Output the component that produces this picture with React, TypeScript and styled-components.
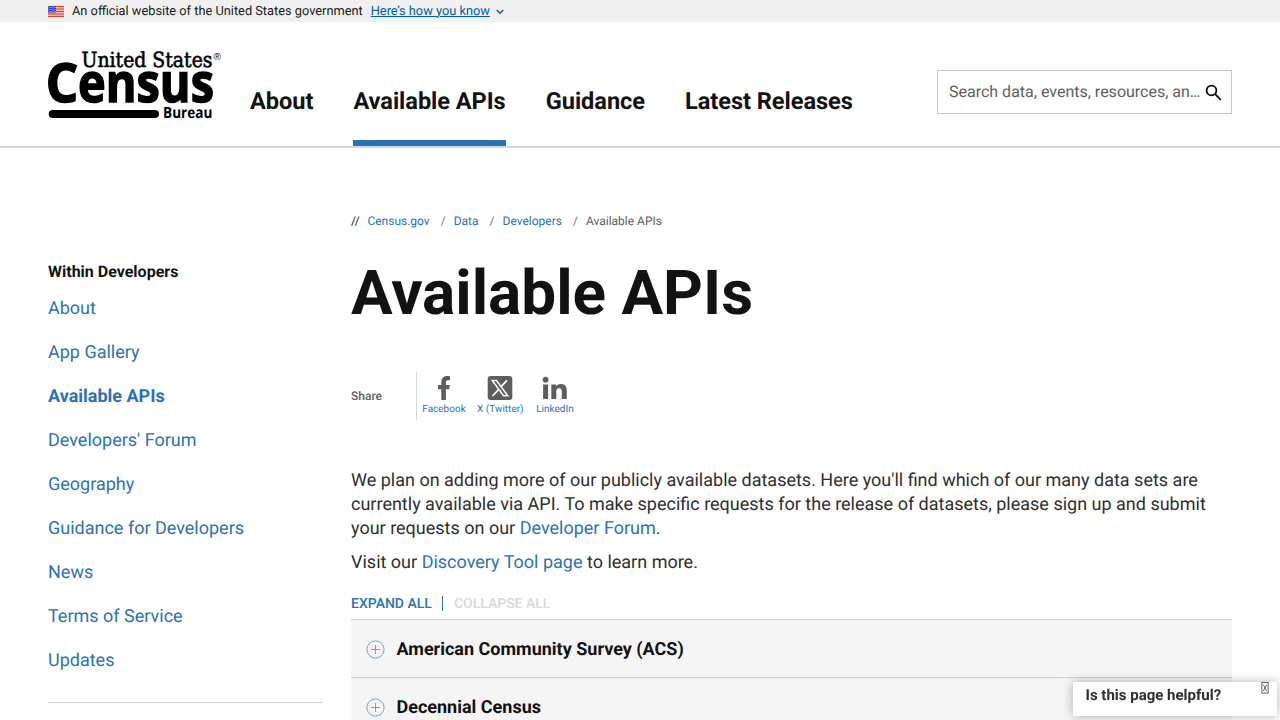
import React from 'react';
import styled, { createGlobalStyle, css } from 'styled-components';

const GlobalStyle = createGlobalStyle`
  *, *::before, *::after { box-sizing: border-box; }
  body {
    margin: 0;
    background: #fff;
    color: #2e2e2e;
    font-family: Roboto, "Liberation Sans", sans-serif;
    height: 720px;
    overflow: hidden;
    text-rendering: geometricPrecision;
  }
  a { color: #2a72b5; text-decoration: none; }
`;

const Page = styled.div`
  height: 720px;
  overflow: hidden;
`;

const GovBanner = styled.div`
  display: flex;
  align-items: center;
  height: 22px;
  padding: 1px 48px 0;
  background: #f0f0f0;
  color: #1b1b1b;
  font-size: 12.8px;
  line-height: 22px;
  white-space: nowrap;
`;

const Flag = styled.svg`
  width: 16px;
  height: 11px;
  margin-right: 8px;
`;

const BannerLink = styled.a`
  display: flex;
  align-items: center;
  margin-left: 8px;
  color: #005ea2;
  span { text-decoration: underline; text-underline-offset: 1px; }
  svg { margin: 1px 0 0 6px; }
`;

const Header = styled.header`
  display: flex;
  height: 126px;
  padding: 0 48px;
  border-bottom: 2px solid #cfdbe0;
`;

const Logo = styled.svg`
  width: 176px;
  height: 76px;
  margin: 24px 26px 0 0;
  flex: none;
  overflow: visible;
`;

const Nav = styled.nav`
  display: flex;
  gap: 40px;
  padding-top: 54px;
`;

const NavItem = styled.a<{ $active?: boolean }>`
  height: 70px;
  color: #121212;
  font-size: 23.6px;
  letter-spacing: -0.05px;
  font-weight: 700;
  line-height: 50px;
  white-space: nowrap;
  border-bottom: 6px solid ${p => (p.$active ? '#2a72b5' : 'transparent')};
`;

const SearchBox = styled.div`
  display: flex;
  align-items: center;
  width: 295px;
  height: 44px;
  margin: 48px 0 0 auto;
  padding: 0 9px 0 11px;
  border: 1px solid #c9c9c9;
  color: #5e5e5e;
  font-size: 16px;
`;

const SearchText = styled.span`
  flex: 1;
  padding-bottom: 1px;
  white-space: nowrap;
`;

const Columns = styled.div`
  display: flex;
  padding: 0 48px;
`;

const Sidebar = styled.aside`
  width: 275px;
  flex: none;
  margin: 112px 28px 0 0;
  height: 443px;
  border-bottom: 1px solid #d0d4d6;
`;

const SideTitle = styled.h2`
  margin: 0;
  color: #121212;
  font-size: 16px;
  font-weight: 700;
  line-height: 24px;
`;

const SideLink = styled.a<{ $current?: boolean }>`
  display: block;
  height: 44px;
  font-size: 18px;
  line-height: 50px;
  font-weight: ${p => (p.$current ? 700 : 400)};
`;

const Main = styled.main`
  flex: 1;
  min-width: 0;
  padding-top: 64px;
`;

const Crumbs = styled.div`
  display: flex;
  height: 18px;
  color: #5e5e5e;
  font-size: 12px;
  line-height: 18px;
  white-space: nowrap;
`;

const CrumbStart = styled.span`
  color: #121212;
  width: 16.4px;
`;

const CrumbSlash = styled.span`
  width: 24px;
  padding-left: 11px;
  color: #71767a;
`;

const Title = styled.h1`
  margin: 20px 0 0;
  height: 86px;
  color: #121212;
  font-size: 62px;
  font-weight: 700;
  line-height: 88px;
`;

const ShareRow = styled.div`
  display: flex;
  height: 48px;
  margin-top: 36px;
`;

const ShareLabel = styled.div`
  width: 66px;
  border-right: 1px solid #cfdbe0;
  color: #5e5e5e;
  font-size: 12px;
  font-weight: 500;
  line-height: 48px;
`;

const ShareItem = styled.a<{ $w: number; $ml: number }>`
  display: flex;
  flex-direction: column;
  align-items: center;
  width: ${p => p.$w}px;
  margin-left: ${p => p.$ml}px;
  padding-top: 3px;
  font-size: 10px;
  line-height: 12px;
  white-space: nowrap;
  svg { display: block; margin-bottom: 3px; }
`;

const Intro = styled.div`
  padding-top: 49px;
  font-size: 18px;
  line-height: 24px;
  p { margin: 0 0 10px; white-space: nowrap; }
`;

const Toggles = styled.div`
  display: flex;
  align-items: flex-start;
  height: 34px;
  padding-top: 11px;
  font-size: 14px;
  font-weight: 500;
  line-height: 17px;
`;

const ToggleLink = styled.a<{ $muted?: boolean }>`
  height: 15px;
  ${p =>
    p.$muted
      ? css`
          color: #d3d9dc;
        `
      : css`
          padding-right: 10px;
          margin-right: 11px;
          border-right: 1px solid #2a72b5;
        `}
`;

const AccordionRow = styled.div`
  display: flex;
  align-items: center;
  height: 58px;
  padding: 1px 0 0 15px;
  border-top: 1px solid #cdd3d5;
  background: #f5f5f5;
  color: #121212;
  font-size: 18px;
  font-weight: 700;
  svg { margin-right: 11.5px; }
`;

const Feedback = styled.div`
  position: fixed;
  left: 1073px;
  top: 682px;
  width: 204px;
  height: 34px;
  padding: 0 8px 0 12.5px;
  display: flex;
  justify-content: space-between;
  background: #fff;
  color: #2e2e2e;
  font-size: 15px;
  font-weight: 700;
  line-height: 26px;
  box-shadow: 0 0 10px rgba(0, 0, 0, 0.3);
`;

const stripes = [0, 1, 2, 3, 4, 5, 6];
const stars = [1, 3, 5, 7];

const FlagIcon = () => (
  <Flag viewBox="0 0 16 11">
    <rect width="16" height="11" fill="#fff" />
    {stripes.map(i => (
      <rect key={i} y={i * 1.67} width="16" height="1" fill="#dc3a21" />
    ))}
    <rect width="8" height="6.5" fill="#1f36c7" />
    {stars.map(x => [1, 3, 5].map(y => (
      <circle key={`${x}-${y}`} cx={x} cy={y + (x % 4 === 1 ? 0 : 0.5)} r="0.6" fill="#fff" />
    )))}
  </Flag>
);

const CensusLogo = () => (
  <Logo viewBox="48 46 176 76" fill="#000">
    <text x="81.5" y="67" fontFamily="DejaVu Serif" fontSize="20.8" textLength="131" lengthAdjust="spacingAndGlyphs" stroke="#000" strokeWidth="0.6">
      United States
    </text>
    <text x="213.5" y="59.5" fontFamily="Liberation Sans" fontSize="10">®</text>
    <text x="45.8" y="101.5" fontFamily="Open Sans" fontWeight="700" fontSize="54" textLength="32.5" lengthAdjust="spacingAndGlyphs" stroke="#000" strokeWidth="1.5">C</text>
    <text x="78" y="101.5" fontFamily="Open Sans" fontWeight="700" fontSize="54" textLength="136" lengthAdjust="spacingAndGlyphs" stroke="#000" strokeWidth="1.5">ensus</text>
    <rect x="48.7" y="110" width="110.3" height="8" rx="4" />
    <text x="163" y="118" fontFamily="Open Sans" fontWeight="700" fontSize="15.5" textLength="49.5" lengthAdjust="spacingAndGlyphs">Bureau</text>
  </Logo>
);

const PlusIcon = () => (
  <svg width="19" height="19" viewBox="0 0 19 19" fill="none" stroke="#4f8fca" strokeWidth="0.8">
    <circle cx="9.5" cy="9.5" r="8.6" />
    <path d="M9.5 5v9M5 9.5h9" />
  </svg>
);

const navItems = ['About', 'Available APIs', 'Guidance', 'Latest Releases'];
const sideItems = ['About', 'App Gallery', 'Available APIs', "Developers' Forum", 'Geography', 'Guidance for Developers', 'News', 'Terms of Service', 'Updates'];

export default function App() {
  return (
    <Page>
      <GlobalStyle />
      <GovBanner>
        <FlagIcon />
        An official website of the United States government
        <BannerLink>
          <span>Here’s how you know</span>
          <svg width="8" height="6" viewBox="0 0 8 6" fill="none" stroke="#005ea2" strokeWidth="1.4">
            <path d="M0.7 1 4 4.3 7.3 1" />
          </svg>
        </BannerLink>
      </GovBanner>
      <Header>
        <CensusLogo />
        <Nav>
          {navItems.map(n => (
            <NavItem key={n} $active={n === 'Available APIs'}>{n}</NavItem>
          ))}
        </Nav>
        <SearchBox>
          <SearchText>Search data, events, resources, an…</SearchText>
          <svg width="17" height="17" viewBox="0 0 17 17" fill="none" stroke="#000" strokeWidth="1.8">
            <circle cx="6.5" cy="6.5" r="4.9" />
            <path d="M9.9 9.9l5.9 5.9" />
          </svg>
        </SearchBox>
      </Header>
      <Columns>
        <Sidebar>
          <SideTitle>Within Developers</SideTitle>
          {sideItems.map(s => (
            <SideLink key={s} $current={s === 'Available APIs'}>{s}</SideLink>
          ))}
        </Sidebar>
        <Main>
          <Crumbs>
            <CrumbStart>//</CrumbStart>
            {['Census.gov', 'Data', 'Developers'].map(c => (
              <React.Fragment key={c}>
                <a>{c}</a>
                <CrumbSlash>/</CrumbSlash>
              </React.Fragment>
            ))}
            <span>Available APIs</span>
          </Crumbs>
          <Title>Available APIs</Title>
          <ShareRow>
            <ShareLabel>Share</ShareLabel>
            <ShareItem $w={44} $ml={5}>
              <svg width="26" height="26" viewBox="0 0 26 26" fill="#5e5e5e">
                <path d="M10.3 25V14.3H7V10h3.3V7.2C10.3 3.3 12.5 1 16.2 1c1.2 0 2.5.2 2.8.3v4h-2c-1.7 0-2.1.9-2.1 2.1V10h3.9l-.6 4.3h-3.3V25z" />
              </svg>
              Facebook
            </ShareItem>
            <ShareItem $w={46} $ml={11.3}>
              <svg width="26" height="26" viewBox="0 0 26 26">
                <rect x="0.7" y="1" width="24.6" height="24" rx="3" fill="#5e5e5e" />
                <path d="M5.2 5.5h4.3l11.3 15.2h-4.3z" fill="none" stroke="#fff" strokeWidth="1.5" />
                <path d="M20 5.3l-6.1 6.6M11.6 14.5l-6.1 6.5" stroke="#fff" strokeWidth="1.7" />
              </svg>
              X (Twitter)
            </ShareItem>
            <ShareItem $w={38} $ml={12.7}>
              <svg width="26" height="26" viewBox="0 0 26 26" fill="#5e5e5e">
                <circle cx="3.6" cy="4.7" r="2.9" />
                <path d="M1.1 9.4h5V24h-5zM9.3 9.4h4.8v2c.7-1.3 2.3-2.4 4.8-2.4 5 0 5.9 3.2 5.9 7.5V24h-5v-6.7c0-1.9-.2-4.1-2.7-4.1s-2.8 2-2.8 4V24h-5z" />
              </svg>
              LinkedIn
            </ShareItem>
          </ShareRow>
          <Intro>
            <p>
              We plan on adding more of our publicly available datasets. Here you'll find which of our many data sets are<br />
              currently available via API. To make specific requests for the release of datasets, please sign up and submit<br />
              your requests on our <a>Developer Forum</a>.
            </p>
            <p>Visit our <a>Discovery Tool page</a> to learn more.</p>
          </Intro>
          <Toggles>
            <ToggleLink>EXPAND ALL</ToggleLink>
            <ToggleLink $muted>COLLAPSE ALL</ToggleLink>
          </Toggles>
          <AccordionRow><PlusIcon />American Community Survey (ACS)</AccordionRow>
          <AccordionRow><PlusIcon />Decennial Census</AccordionRow>
        </Main>
      </Columns>
      <Feedback>
        <span>Is this page helpful?</span>
        <svg width="8" height="12" viewBox="0 0 8 12" fill="none" stroke="#444" strokeWidth="0.8">
          <rect x="0.9" y="0.5" width="6.2" height="10.6" />
          <path d="M2.3 2.6l3.4 6.4M5.7 2.6l-3.4 6.4" />
        </svg>
      </Feedback>
    </Page>
  );
}
